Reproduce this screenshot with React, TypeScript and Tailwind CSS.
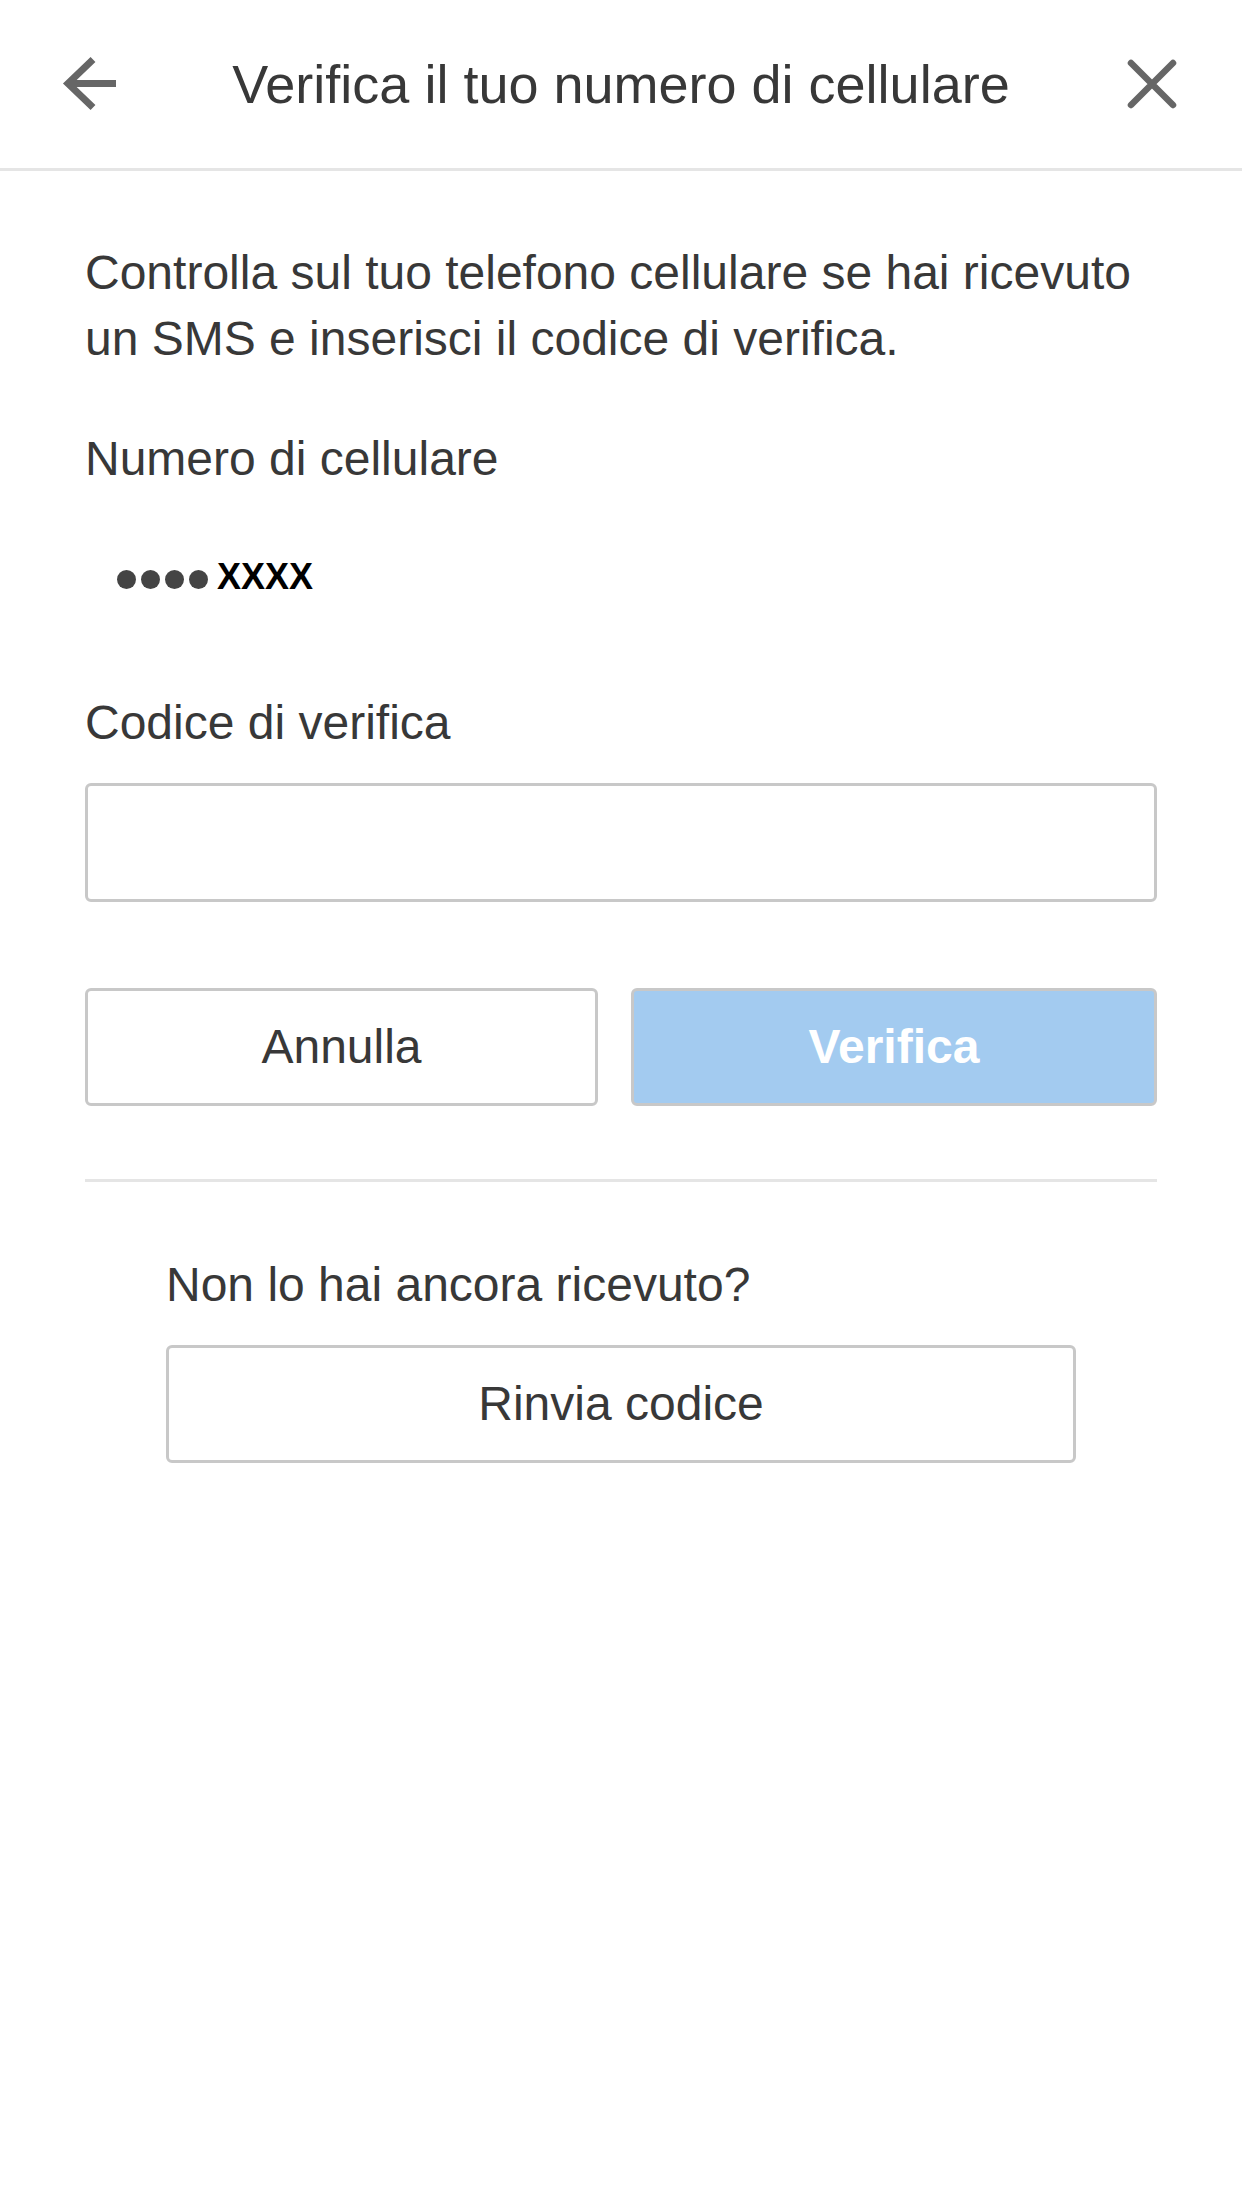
import React from "react";

function BackIcon() {
    return (
        <svg width="60" height="60" viewBox="0 0 60 60" fill="none">
            <path d="M55 29.5H6" stroke="#666666" strokeWidth="7" />
            <path d="M32 5.5L7 29.5L32 53.5" stroke="#666666" strokeWidth="7" />
        </svg>
    );
}

function CloseIcon() {
    return (
        <svg width="60" height="60" viewBox="0 0 60 60" fill="none">
            <path d="M9 9L51 51M51 9L9 51" stroke="#666666" strokeWidth="6.5" strokeLinecap="round" />
        </svg>
    );
}

export default function App() {
    return (
        <div
            className="min-h-[2208px] w-[1242px] bg-white text-[#383838]"
            style={{ fontFamily: '"Liberation Sans", Arial, sans-serif' }}
        >
            {/* Header */}
            <header className="flex h-[171px] items-center border-b-[3px] border-[#e5e5e5]">
                <div className="flex w-[180px] items-center pl-[61px]">
                    <BackIcon />
                </div>
                <h1 className="flex-1 text-center text-[54px] leading-[168px] text-[#383838]">
                    Verifica il tuo numero di cellulare
                </h1>
                <div className="flex w-[180px] items-center justify-end pr-[60px]">
                    <CloseIcon />
                </div>
            </header>

            <main className="px-[85px] pt-[69px]">
                <p className="text-[48px] leading-[66px]">
                    Controlla sul tuo telefono cellulare se hai ricevuto
                    <br />
                    un SMS e inserisci il codice di verifica.
                </p>

                <div className="mt-[54px] text-[48px] leading-[66px]">Numero di cellulare</div>
                <div className="mt-[52px] flex h-[66px] items-center pl-[32px]">
                    <div className="flex gap-[5px] pt-[5px]">
                        <span className="h-[19px] w-[19px] rounded-full bg-[#444444]" />
                        <span className="h-[19px] w-[19px] rounded-full bg-[#444444]" />
                        <span className="h-[19px] w-[19px] rounded-full bg-[#444444]" />
                        <span className="h-[19px] w-[19px] rounded-full bg-[#444444]" />
                    </div>
                    <span className="ml-[9px] text-[36px] font-bold leading-none text-black">XXXX</span>
                </div>

                <div className="mt-[80px] text-[48px] leading-[66px]">Codice di verifica</div>
                <input
                    type="text"
                    className="mt-[27px] box-border block h-[119px] w-full rounded-[6px] border-[3px] border-[#c8c8c8] bg-white px-[24px] text-[48px] outline-none"
                />

                <div className="mt-[86px] flex gap-[33px]">
                    <button className="box-border flex h-[118px] w-[513px] items-center justify-center rounded-[6px] border-[3px] border-[#c8c8c8] bg-white text-[48px] leading-[66px] text-[#383838]">
                        Annulla
                    </button>
                    <button className="box-border flex h-[118px] flex-1 items-center justify-center rounded-[6px] border-[3px] border-[#c8c8c8] bg-[#a3cbf0] text-[48px] font-bold leading-[66px] text-white">
                        Verifica
                    </button>
                </div>

                <div className="mt-[73px] h-[3px] bg-[#e5e5e5]" />

                <div className="mt-[70px] px-[81px]">
                    <div className="text-[48px] leading-[66px]">Non lo hai ancora ricevuto?</div>
                    <button className="mt-[27px] box-border flex h-[118px] w-full items-center justify-center rounded-[6px] border-[3px] border-[#c8c8c8] bg-white text-[48px] leading-[66px] text-[#383838]">
                        Rinvia codice
                    </button>
                </div>
            </main>
        </div>
    );
}
